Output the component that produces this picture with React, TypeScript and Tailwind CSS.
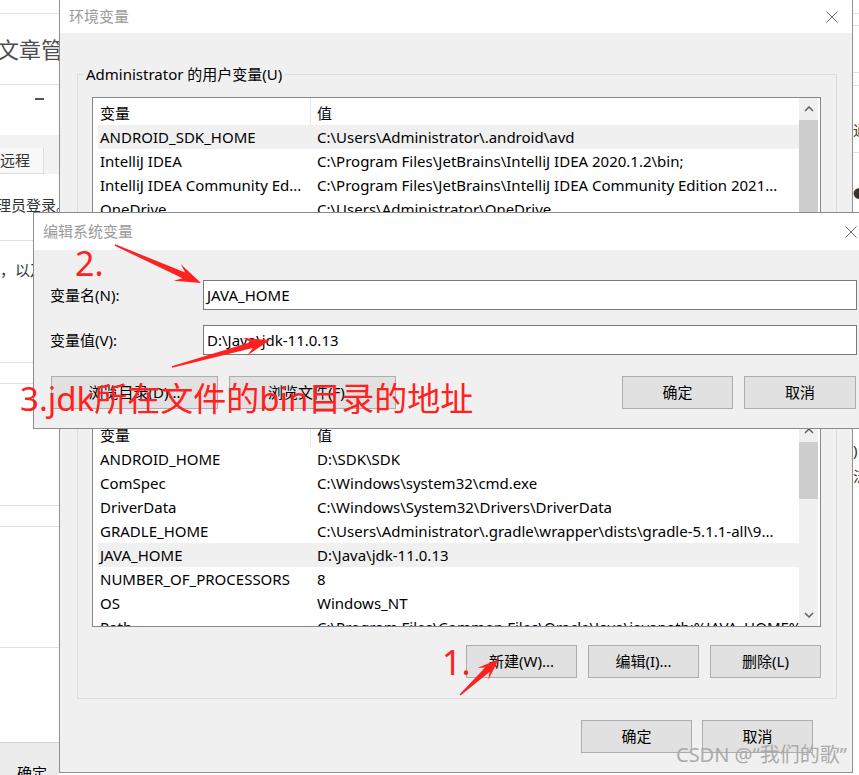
import React from "react";

type Row = { name: string; value: string; selected?: boolean };

const userVars: Row[] = [
  { name: "ANDROID_SDK_HOME", value: "C:\\Users\\Administrator\\.android\\avd", selected: true },
  { name: "IntelliJ IDEA", value: "C:\\Program Files\\JetBrains\\IntelliJ IDEA 2020.1.2\\bin;" },
  { name: "IntelliJ IDEA Community Ed...", value: "C:\\Program Files\\JetBrains\\IntelliJ IDEA Community Edition 2021..." },
  { name: "OneDrive", value: "C:\\Users\\Administrator\\OneDrive" },
  { name: "Path", value: "C:\\Users\\Administrator\\AppData\\Local\\Microsoft\\WindowsApps;" },
  { name: "TEMP", value: "C:\\Users\\Administrator\\AppData\\Local\\Temp" },
  { name: "TMP", value: "C:\\Users\\Administrator\\AppData\\Local\\Temp" },
];

const sysVars: Row[] = [
  { name: "ANDROID_HOME", value: "D:\\SDK\\SDK" },
  { name: "ComSpec", value: "C:\\Windows\\system32\\cmd.exe" },
  { name: "DriverData", value: "C:\\Windows\\System32\\Drivers\\DriverData" },
  { name: "GRADLE_HOME", value: "C:\\Users\\Administrator\\.gradle\\wrapper\\dists\\gradle-5.1.1-all\\9..." },
  { name: "JAVA_HOME", value: "D:\\Java\\jdk-11.0.13", selected: true },
  { name: "NUMBER_OF_PROCESSORS", value: "8" },
  { name: "OS", value: "Windows_NT" },
  { name: "Path", value: "C:\\Program Files\\Common Files\\Oracle\\Java\\javapath;%JAVA_HOME%\\bin;..." },
];

const CloseX = () => (
  <svg width="12" height="12" viewBox="0 0 12 12">
    <path d="M0.5 0.5L11.5 11.5M11.5 0.5L0.5 11.5" stroke="#6b6b6b" strokeWidth="1" />
  </svg>
);

const Chevron = ({ down }: { down?: boolean }) => (
  <svg width="10" height="6" viewBox="0 0 10 6">
    <path d={down ? "M1 1L5 5L9 1" : "M1 5L5 1L9 5"} fill="none" stroke="#606060" strokeWidth="1.5" />
  </svg>
);

const Btn = ({ w, children }: { w: string; children: React.ReactNode }) => (
  <div className={`h-[33px] ${w} shrink-0 border border-[#adadad] bg-[#e1e1e1] flex items-center justify-center whitespace-nowrap`}>
    {children}
  </div>
);

const ScrollBar = ({ thumb, showDown }: { thumb: string; showDown?: boolean }) => (
  <div className="w-[19px] shrink-0 bg-[#f0f0f0] flex flex-col">
    <div className="h-[22px] flex items-center justify-center">
      <Chevron />
    </div>
    <div className={`${thumb} bg-[#cdcdcd]`} />
    <div className="flex-1" />
    {showDown && (
      <div className="h-[22px] flex items-center justify-center">
        <Chevron down />
      </div>
    )}
  </div>
);

const VarList = ({ rows, thumb, showDown }: { rows: Row[]; thumb: string; showDown?: boolean }) => (
  <div className="w-[729px] h-[208px] border border-[#828790] bg-white flex overflow-hidden">
    <div className="flex-1 min-w-0 flex flex-col">
      <div className="h-[27px] shrink-0 flex">
        <div className="w-[218px] pl-[7px] pt-[3px] flex items-center border-r border-[#e5e5e5]">变量</div>
        <div className="pl-[6px] pt-[3px] flex items-center">值</div>
      </div>
      {rows.map((r) => (
        <div
          key={r.name}
          className={`ml-[5px] h-[24px] shrink-0 flex items-center whitespace-nowrap ${r.selected ? "bg-[#f0f0f0]" : ""}`}
        >
          <div className="w-[212px] shrink-0 pl-[2px] overflow-hidden">{r.name}</div>
          <div className="pl-[7px] flex-1 min-w-0 overflow-hidden">{r.value}</div>
        </div>
      ))}
    </div>
    <ScrollBar thumb={thumb} showDown={showDown} />
    <div className="w-[2px] shrink-0" />
  </div>
);

const GroupBox = ({ title, rows, thumb, className }: { title: string; rows: Row[]; thumb: string; className: string }) => (
  <fieldset className={`ml-[17px] w-[760px] border border-[#dcdcdc] ${className}`}>
    <legend className="ml-[5px] px-[3px] leading-[20px]">{title}</legend>
    <div className="pl-[14px] pr-[15px] pt-[13px] pb-[20px]">
      <VarList rows={rows} thumb={thumb} showDown />
      <div className="mt-[18px] flex justify-end gap-[11px]">
        <Btn w="w-[111px]">新建(W)...</Btn>
        <Btn w="w-[111px]">编辑(I)...</Btn>
        <Btn w="w-[111px]">删除(L)</Btn>
      </div>
    </div>
  </fieldset>
);

// red pointer arrow, thin at the tail and flaring into a head
const Arrow = ({ x1, y1, x2, y2, head = 26, wing = 9 }: { x1: number; y1: number; x2: number; y2: number; head?: number; wing?: number }) => {
  const dx = x2 - x1;
  const dy = y2 - y1;
  const len = Math.hypot(dx, dy);
  const ux = dx / len;
  const uy = dy / len;
  const nx = -uy;
  const ny = ux;
  const nkx = x2 - ux * head * 0.72;
  const nky = y2 - uy * head * 0.72;
  const bx = x2 - ux * head;
  const by = y2 - uy * head;
  const pts = [
    [x1 + nx * 0.8, y1 + ny * 0.8],
    [nkx + nx * 3.2, nky + ny * 3.2],
    [bx + nx * wing, by + ny * wing],
    [x2, y2],
    [bx - nx * wing, by - ny * wing],
    [nkx - nx * 3.2, nky - ny * 3.2],
    [x1 - nx * 0.8, y1 - ny * 0.8],
  ];
  return <polygon points={pts.map((p) => p.join(",")).join(" ")} fill="#ff2020" />;
};

const Line = () => <div className="h-px shrink-0 bg-[#e0e0e0]" />;

const LeftPage = () => (
  <div className="w-[59px] shrink-0 flex flex-col overflow-hidden whitespace-nowrap text-[#333]">
    <div className="h-[13px] shrink-0" />
    <Line />
    <div className="h-[70px] shrink-0 flex items-center -ml-[3px] text-[22px] text-[#4d4d4d]">文章管理</div>
    <Line />
    <div className="h-[50px] shrink-0 pt-[13px] pl-[35px]">
      <div className="w-[9px] h-[2px] bg-[#555]" />
    </div>
    <div className="h-[13px] shrink-0 bg-[#f2f2f2]" />
    <div className="h-[26px] shrink-0 flex bg-[#f2f2f2]">
      <div className="w-[44px] bg-[#f8f8f8] border-r border-b border-[#dcdcdc] flex items-center">远程</div>
    </div>
    <div className="h-[66px] shrink-0 pt-[21px] -ml-[4px] leading-[20px]">理员登录。</div>
    <Line />
    <div className="h-[121px] shrink-0 pt-[19px] leading-[20px]">，以及</div>
    <Line />
    <div className="h-[20px] shrink-0" />
    <Line />
    <div className="h-[121px] shrink-0" />
    <Line />
    <div className="h-[20px] shrink-0" />
    <Line />
    <div className="h-[120px] shrink-0" />
    <Line />
    <div className="h-[94px] shrink-0" />
    <div className="h-px shrink-0 bg-[#d5d5d5]" />
    <div className="flex-1 bg-[#ececec] pt-[20px] pl-[17px] leading-[20px] text-black">确定</div>
  </div>
);

const RightPage = () => (
  <div className="w-[6px] shrink-0 flex flex-col overflow-hidden whitespace-nowrap text-[#333]">
    <div className="h-[13px] shrink-0" />
    <Line />
    <div className="h-[11px] shrink-0" />
    <Line />
    <div className="h-[46px] shrink-0" />
    <Line />
    <div className="h-[12px] shrink-0" />
    <Line />
    <div className="h-[66px] shrink-0 pt-[34px] leading-[20px]">通</div>
    <Line />
    <div className="h-[283px] shrink-0 pt-[32px] leading-[20px] text-[12px]">●</div>
    <div className="h-[30px] shrink-0 pt-[4px] leading-[20px]">)</div>
    <div className="leading-[20px]">泛</div>
  </div>
);

export default function App() {
  return (
    <div className="relative w-[859px] h-[775px] overflow-hidden bg-white text-[15px] text-black font-['Noto_Sans','Noto_Sans_CJK_SC',sans-serif]">
      <div className="flex h-full">
        <LeftPage />
        <div className="flex-1" />
        <RightPage />
      </div>

      {/* 环境变量 */}
      <div className="absolute left-[59px] top-0 w-[794px] h-[773px] border-x border-b border-[#8f8f8f] flex flex-col">
        <div className="h-[33px] shrink-0 bg-white flex items-center justify-between pl-[9px] pr-[14px]">
          <span className="text-[#9a9a9a]">环境变量</span>
          <CloseX />
        </div>
        <div className="flex-1 bg-[#f0f0f0] pt-[31px] flex flex-col">
          <GroupBox title="Administrator 的用户变量(U)" rows={userVars} thumb="h-[150px]" className="" />
          <GroupBox title="系统变量(S)" rows={sysVars} thumb="h-[57px]" className="mt-[9px]" />
          <div className="mt-[21px] pr-[39px] flex justify-end gap-[10px]">
            <Btn w="w-[111px]">确定</Btn>
            <Btn w="w-[111px]">取消</Btn>
          </div>
        </div>
      </div>

      {/* 编辑系统变量 */}
      <div className="absolute left-[33px] top-[212px] w-[840px] h-[217px] border border-[#8c8c8c] flex flex-col">
        <div className="h-[37px] shrink-0 bg-white flex items-center justify-between pl-[9px] pr-[15px]">
          <span className="text-[#9a9a9a]">编辑系统变量</span>
          <CloseX />
        </div>
        <div className="flex-1 bg-[#f0f0f0] pt-[30px]">
          <div className="flex items-center pl-[16px]">
            <div className="w-[153px] shrink-0">变量名(N):</div>
            <div className="w-[654px] h-[30px] shrink-0 border border-[#7a7a7a] bg-white flex items-center pl-[3px]">JAVA_HOME</div>
          </div>
          <div className="mt-[15px] flex items-center pl-[16px]">
            <div className="w-[153px] shrink-0">变量值(V):</div>
            <div className="w-[654px] h-[30px] shrink-0 border border-[#7a7a7a] bg-white flex items-center pl-[3px]">D:\Java\jdk-11.0.13</div>
          </div>
          <div className="mt-[21px] flex pl-[17px] pr-[16px]">
            <div className="flex gap-[11px]">
              <Btn w="w-[167px]">浏览目录(D)...</Btn>
              <Btn w="w-[167px]">浏览文件(F)...</Btn>
            </div>
            <div className="ml-auto flex gap-[11px]">
              <Btn w="w-[111px]">确定</Btn>
              <Btn w="w-[112px]">取消</Btn>
            </div>
          </div>
        </div>
      </div>

      {/* 标注 */}
      <svg className="absolute inset-0 pointer-events-none" width="859" height="775">
        <Arrow x1={115} y1={245} x2={201} y2={283} />
        <Arrow x1={172} y1={367} x2={270} y2={340} />
        <Arrow x1={460} y1={695} x2={499} y2={659} head={22} wing={8} />
      </svg>
      <div className="absolute left-[75px] top-[246px] text-[34px] leading-none text-[#ff2020]">2.</div>
      <div className="absolute left-[20px] top-[382px] text-[33px] leading-none text-[#ff2020] whitespace-nowrap">3.jdk所在文件的bin目录的地址</div>
      <div className="absolute left-[442px] top-[645px] text-[34px] leading-none text-[#ff2020]">1.</div>

      <div className="absolute left-[676px] top-[745px] text-[20px] leading-none text-[#ababab] whitespace-nowrap">CSDN @“我们的歌”</div>
    </div>
  );
}
